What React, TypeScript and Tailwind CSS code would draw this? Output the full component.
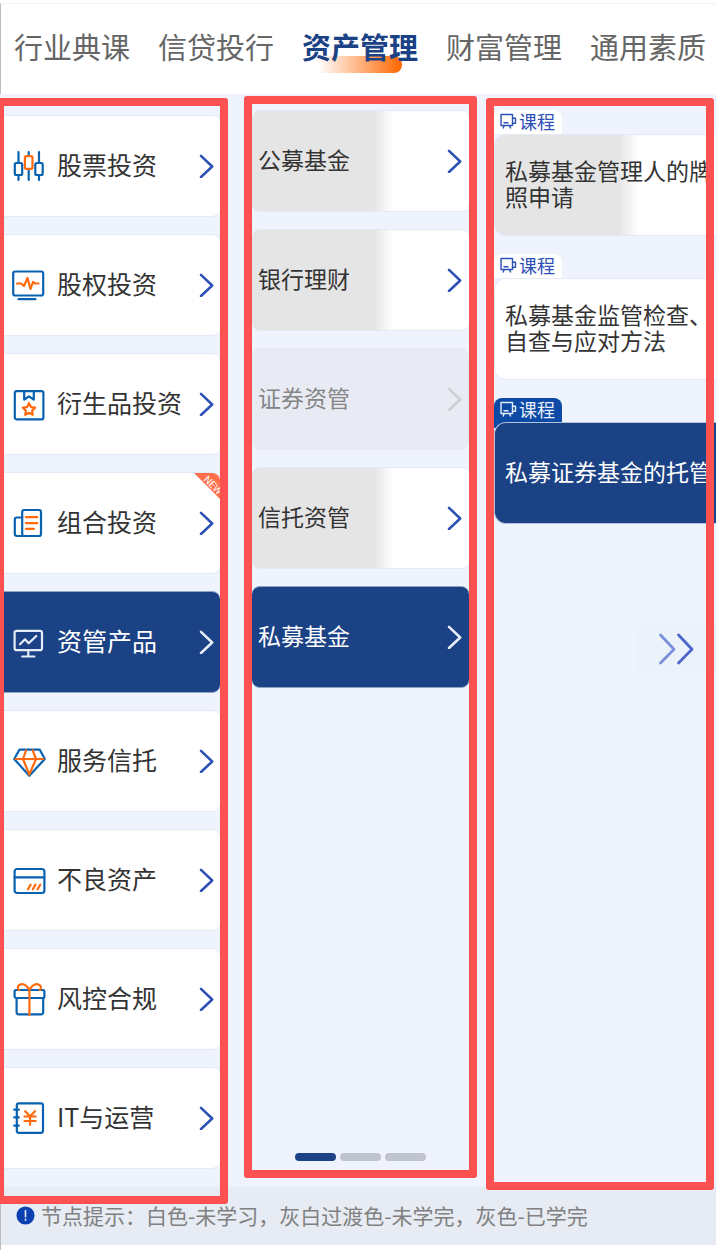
import { useState, type ReactNode } from "react";
import clsx from "clsx";

const BLUE = "#0862b0";
const ORANGE = "#ff6a0d";

const tabs = ["行业典课", "信贷投行", "资产管理", "财富管理", "通用素质"];

const icons: Record<string, ReactNode> = {
  candles: (
    <>
      <path d="M6.5 3v11M6.5 26.5V31M27 3v11M27 26.5V31M16.7 3v4M16.7 20v11" />
      <rect x="2.8" y="14" width="7.4" height="12" rx="1.5" />
      <rect x="23.3" y="14" width="7.4" height="12" rx="1.5" />
      <rect x="12.9" y="7.2" width="7.6" height="12.6" rx="1.5" stroke={ORANGE} />
    </>
  ),
  pulse: (
    <>
      <rect x="1.2" y="3.5" width="30" height="24" rx="2" />
      <path d="M6.5 31.2h17" />
      <path d="M5 15.5h4l3 2.5 3.5-8 3 11 2.5-7 2 1.5h3.5" stroke={ORANGE} />
    </>
  ),
  bookmark: (
    <>
      <rect x="2.8" y="4.2" width="28.6" height="28.2" rx="2" />
      <path d="M12.2 4.5v8.2l4.8-3.4 4.8 3.4V4.5" />
      <path
        d="M17 16.2l1.9 3.8 4.2.6-3 3 .7 4.2-3.8-2-3.8 2 .7-4.2-3-3 4.2-.6z"
        stroke={ORANGE}
      />
    </>
  ),
  docs: (
    <>
      <path d="M10.2 11.5H5a2.2 2.2 0 0 0-2.2 2.2v14.1A2.2 2.2 0 0 0 5 30h5" />
      <rect x="10.2" y="4" width="18.8" height="26" rx="2" />
      <path d="M14 11.2h11.3M14 17.2h11.3M14 22.8h8" stroke={ORANGE} />
    </>
  ),
  monitor: (
    <>
      <rect x="2.6" y="5.8" width="27.4" height="19.4" rx="2" />
      <path d="M16.3 25.2v6.3M10.2 31.5h12.2M8 19.3l5-5 3.7 4 7.6-7.3" />
    </>
  ),
  diamond: (
    <>
      <path d="M2.2 15l5.2-9.3h20.4l5 9.3-15.5 16.8z" />
      <path d="M3.5 15h28M14 6.5L11 15l6.3 15.5L24 15l-3.2-8.5" stroke={ORANGE} />
    </>
  ),
  card: (
    <>
      <rect x="2.6" y="6" width="29.8" height="24" rx="2.5" />
      <path d="M2.6 14.3h29.8" />
      <path d="M16 26.3l2.6-4.6M20.8 26.3l2.6-4.6M25.6 26.3l2.6-4.6" stroke={ORANGE} />
    </>
  ),
  gift: (
    <>
      <rect x="2.6" y="8" width="29.8" height="8" rx="1.5" />
      <path d="M4.6 16v14.3a2 2 0 0 0 2 2h22.6a2 2 0 0 0 2-2V16" />
      <path
        d="M17.4 33V8.2C15 3.6 11.6 1.9 8.8 2.3 6 2.8 5 5.6 7 8M17.4 8.2c2.4-4.6 5.8-6.3 8.6-5.9 2.8.5 3.8 3.3 1.8 5.7"
        stroke={ORANGE}
      />
    </>
  ),
  ledger: (
    <>
      <rect x="4.8" y="2.4" width="26.2" height="29.4" rx="2" />
      <path d="M2.2 8.7h4.6M2.2 16.4h4.6M2.2 24.6h4.6" />
      <path
        d="M13.2 10.2l4.9 5 4.9-5M12.5 15.5h11.2M12.5 20h11.2M18.1 15.5v8.3"
        stroke={ORANGE}
      />
    </>
  ),
};

const categories = [
  { label: "股票投资", icon: "candles" },
  { label: "股权投资", icon: "pulse" },
  { label: "衍生品投资", icon: "bookmark" },
  { label: "组合投资", icon: "docs", isNew: true },
  { label: "资管产品", icon: "monitor" },
  { label: "服务信托", icon: "diamond" },
  { label: "不良资产", icon: "card" },
  { label: "风控合规", icon: "gift" },
  { label: "IT与运营", icon: "ledger" },
];

const products = [
  { label: "公募基金", partial: true },
  { label: "银行理财", partial: true },
  { label: "证券资管", disabled: true },
  { label: "信托资管", partial: true },
  { label: "私募基金" },
];

const courses = [
  { label: "私募基金管理人的牌照申请", partial: true },
  { label: "私募基金监管检查、自查与应对方法" },
  { label: "私募证券基金的托管" },
];

const PARTIAL = "bg-[linear-gradient(to_right,#e5e5e5_56%,#ffffff_65%)]";

function Chevron({ className }: { className?: string }) {
  return (
    <svg
      viewBox="0 0 15 24"
      className={clsx("h-6 w-[15px] shrink-0", className)}
      fill="none"
      stroke="currentColor"
      strokeWidth="2.5"
      strokeLinecap="round"
      strokeLinejoin="round"
    >
      <path d="M2 1.8L13.2 12.5 2 23" />
    </svg>
  );
}

function CategoryIcon({ name, active }: { name: string; active: boolean }) {
  return (
    <svg
      viewBox="0 0 34 34"
      className="size-[34px] shrink-0"
      fill="none"
      stroke={active ? "#e6edf8" : BLUE}
      strokeWidth="2.2"
      strokeLinecap="round"
      strokeLinejoin="round"
    >
      {icons[name]}
    </svg>
  );
}

function CourseIcon() {
  return (
    <svg
      viewBox="0 0 17 16"
      className="h-4 w-[17px] shrink-0"
      fill="none"
      stroke="currentColor"
      strokeWidth="1.4"
      strokeLinejoin="round"
    >
      <path d="M1 1.5h11.5v11H1zM3.5 9.7h5M4.2 12.5L3 15.5M9.5 12.5l1.2 3M12.5 5.2h3v5h-3" />
    </svg>
  );
}

function NewRibbon() {
  return (
    <svg viewBox="0 0 26 26" className="absolute right-0 top-0 size-[26px]">
      <path d="M0 0h26v26z" fill="#ff6f4b" />
      <text
        x="9"
        y="7"
        transform="rotate(45 9 7)"
        fill="#ffffff"
        fontSize="10"
        fontFamily="Roboto, sans-serif"
      >
        NEW
      </text>
    </svg>
  );
}

/* red guide frame laid over a column */
function Frame({ className }: { className: string }) {
  return (
    <div
      className={clsx(
        "pointer-events-none absolute z-10 rounded-[3px] border-8 border-[#fc5151]",
        className
      )}
    />
  );
}

export default function App() {
  const [tab, setTab] = useState("资产管理");
  const [category, setCategory] = useState("资管产品");
  const [product, setProduct] = useState("私募基金");
  const [course, setCourse] = useState("私募证券基金的托管");

  return (
    <div className="overflow-hidden border-t-3 border-white bg-white font-['Noto_Sans_CJK_SC','Noto_Sans',sans-serif] text-[#333333]">
      <nav className="flex gap-7 border-l border-t border-l-[#bdbdbd] border-t-[#f3f3f3] pb-7 pl-[13px] pt-[22px]">
        {tabs.map((name) => (
          <button
            key={name}
            type="button"
            onClick={() => setTab(name)}
            className={clsx(
              "relative isolate shrink-0 text-[29px] leading-10",
              tab === name ? "font-bold text-[#1c4286]" : "text-[#666666]"
            )}
          >
            {tab === name && (
              <span className="absolute -bottom-[7px] left-4 right-4 -z-10 h-[17px] rounded-r-lg bg-linear-to-r from-[#ff6600]/0 to-[#ff6600]" />
            )}
            {name}
          </button>
        ))}
      </nav>

      <main className="relative grid grid-cols-[244fr_242fr_230fr] bg-[#eff3fd]">
        <section className="pr-4">
          <div className="relative pb-[18px] pr-2 pt-[21px]">
            <ul className="flex flex-col gap-[17px]">
              {categories.map((item) => {
                const active = item.label === category;
                return (
                  <li key={item.label}>
                    <button
                      type="button"
                      onClick={() => setCategory(item.label)}
                      className={clsx(
                        "relative flex h-[102px] w-full items-center overflow-hidden rounded-r-lg border-y pl-3 pr-1.5",
                        active
                          ? "border-[#8ea3c6] bg-[#1c4286] text-white"
                          : "border-[#e4e9f6] bg-white"
                      )}
                    >
                      <CategoryIcon name={item.icon} active={active} />
                      <span className="ml-[11px] flex-1 whitespace-nowrap pb-1 text-left text-[25px] leading-8">
                        {item.label}
                      </span>
                      <Chevron className={active ? "text-[#e6edf8]" : "text-[#2c50b5]"} />
                      {item.isNew && <NewRibbon />}
                    </button>
                  </li>
                );
              })}
            </ul>
            <Frame className="-bottom-[17px] -left-1 right-0 top-1" />
          </div>
        </section>

        <section className="pr-[9px]">
          <div className="relative flex h-full flex-col px-2 pb-[26px] pt-4">
            <ul className="flex flex-col gap-[17px]">
              {products.map((item) => {
                const active = item.label === product;
                return (
                  <li key={item.label}>
                    <button
                      type="button"
                      disabled={item.disabled}
                      onClick={() => setProduct(item.label)}
                      className={clsx(
                        "flex h-[102px] w-full items-center justify-between rounded-lg border-y pl-1.5 pr-[7px] text-[23px] leading-8",
                        active && "border-[#8ea3c6] bg-[#1c4286] text-white",
                        item.disabled && "border-[#e8ebf4] bg-[#e8ebf4] text-[#858585]",
                        !active && !item.disabled && "border-[#e4e9f6]",
                        !active && item.partial && PARTIAL,
                        !active && !item.partial && !item.disabled && "bg-white"
                      )}
                    >
                      <span className="pb-1">{item.label}</span>
                      <Chevron
                        className={clsx(
                          active && "text-[#e6edf8]",
                          item.disabled && "text-[#cdcfd4]",
                          !active && !item.disabled && "text-[#2c50b5]"
                        )}
                      />
                    </button>
                  </li>
                );
              })}
            </ul>
            <div className="mt-auto flex justify-center gap-1">
              <span className="h-2 w-[41px] rounded-full bg-[#1c4286]" />
              <span className="h-2 w-[41px] rounded-full bg-[#c0c4cd]" />
              <span className="h-2 w-[41px] rounded-full bg-[#c0c4cd]" />
            </div>
            <Frame className="inset-x-0 bottom-[9px] top-0.5" />
          </div>
        </section>

        <section className="relative pl-2 pt-4">
          <ul className="flex flex-col gap-[18px]">
            {courses.map((item) => {
              const active = item.label === course;
              return (
                <li key={item.label}>
                  <div
                    className={clsx(
                      "flex w-[68px] items-center gap-0.5 rounded-t-lg pl-1.5 text-lg",
                      active
                        ? "-mb-1.5 bg-[#0d4aa5] pb-2 text-[#e6edf8]"
                        : "bg-white pb-0.5 text-[#2c50b5]"
                    )}
                  >
                    <CourseIcon />
                    <span className="leading-[22px]">课程</span>
                  </div>
                  <button
                    type="button"
                    onClick={() => setCourse(item.label)}
                    className={clsx(
                      "relative flex h-[102px] w-full items-center rounded-l-xl border border-r-0 pb-1 pl-2.5 text-left text-[23px] leading-[26px]",
                      active
                        ? "border-[#b4c2da] bg-[#1c4286] text-white"
                        : "border-[#e4e9f6]",
                      !active && (item.partial ? PARTIAL : "bg-white")
                    )}
                  >
                    {item.label}
                  </button>
                </li>
              );
            })}
          </ul>
          <button
            type="button"
            aria-label="展开"
            className="absolute right-0 top-[531px] flex h-[47px] w-20 items-center rounded-l-lg bg-[#ebf2fa] pl-[22px]"
          >
            <svg
              viewBox="0 0 36 32"
              className="h-8 w-9"
              fill="none"
              strokeWidth="2.8"
              strokeLinecap="round"
              strokeLinejoin="round"
            >
              <path d="M2.5 2L16 16.2 2.5 30" stroke="#7b8fdb" />
              <path d="M20.5 2L34 16.2 20.5 30" stroke="#4c66cc" />
            </svg>
          </button>
          <Frame className="-bottom-[3px] left-0 right-0.5 top-1" />
        </section>
      </main>

      <footer className="border-l border-[#bdbdbd]">
        <p className="flex items-center bg-[#e7ebf3] pb-0.5 pl-[15px] text-[21px] leading-[56px] text-[#808080]">
          <svg viewBox="0 0 20 20" className="mr-1.5 size-[19px] shrink-0">
            <circle cx="10" cy="10" r="9.5" fill="#0b40b3" />
            <path d="M10 4.8v6.4M10 14v.8" stroke="#dbe5fa" strokeWidth="1.8" strokeLinecap="round" />
          </svg>
          节点提示：白色-未学习，灰白过渡色-未学完，灰色-已学完
        </p>
        <div className="h-[5px] bg-white" />
      </footer>
    </div>
  );
}
